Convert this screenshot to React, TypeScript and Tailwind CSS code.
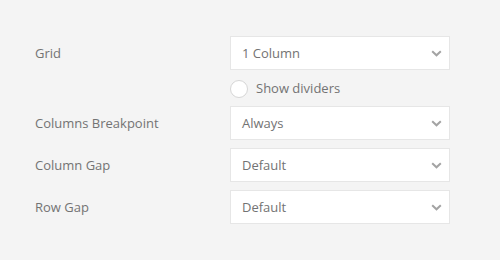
import React from "react";

const FONT = { fontFamily: '"Open Sans", "Noto Sans", sans-serif' };

function Chevron() {
  return (
    <svg width="11" height="7" viewBox="0 0 11 7" className="shrink-0">
      <path d="M1.2 1.2 L5.5 5.3 L9.8 1.2" fill="none" stroke="#a3a3a3" strokeWidth="2" />
    </svg>
  );
}

function Select({ value }: { value: string }) {
  return (
    <div className="flex h-[34px] w-[220px] items-center justify-between border border-[#e6e6e6] bg-white pl-[11px] pr-[7px] pt-[1px] text-[13px] text-[#737373]">
      <span>{value}</span>
      <Chevron />
    </div>
  );
}

function Row({ label, value }: { label: string; value: string }) {
  return (
    <div className="flex items-center">
      <div className="w-[195px] pt-[1px] text-[13px] text-[#737373]">{label}</div>
      <Select value={value} />
    </div>
  );
}

export default function App() {
  return (
    <div className="h-[260px] w-[500px] bg-[#f4f4f4] pl-[35px] pt-[36px]" style={FONT}>
      <Row label="Grid" value="1 Column" />
      <div className="ml-[195px] flex h-[36px] items-center gap-[8px] pt-[2px] text-[13px] text-[#737373]">
        <span className="h-[18px] w-[18px] rounded-full border border-[#d6d6d6] bg-white" />
        <span>Show dividers</span>
      </div>
      <div className="flex flex-col gap-[8px]">
        <Row label="Columns Breakpoint" value="Always" />
        <Row label="Column Gap" value="Default" />
        <Row label="Row Gap" value="Default" />
      </div>
    </div>
  );
}
